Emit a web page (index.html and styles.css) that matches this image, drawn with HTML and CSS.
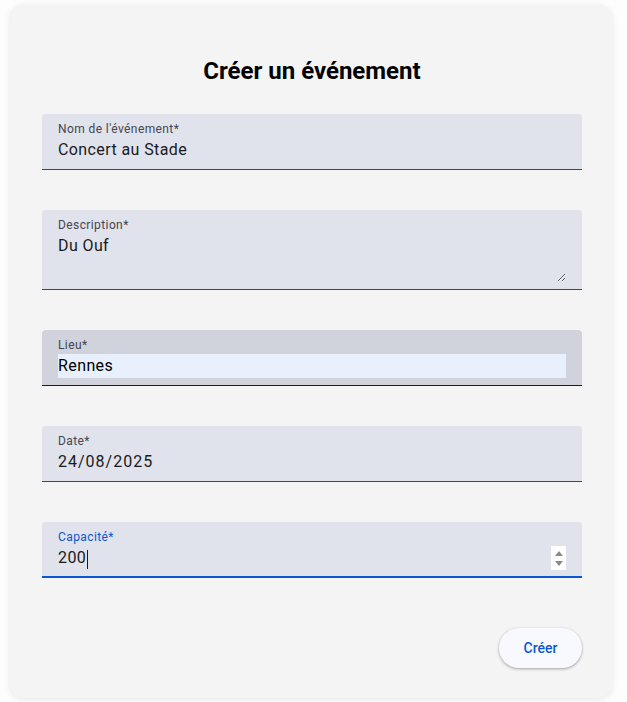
FILE: index.html
```
<!DOCTYPE html>
<html lang="fr">
<head>
<meta charset="utf-8">
<title>Créer un événement</title>
<link rel="stylesheet" href="styles.css">
</head>
<body>
<div class="card">
  <h1 class="title">Créer un événement</h1>
  <form class="form">
    <label class="field">
      <span class="label">Nom de l'événement*</span>
      <input class="input" type="text" value="Concert au Stade">
    </label>
    <label class="field field-tall">
      <span class="label">Description*</span>
      <textarea class="input textarea">Du Ouf</textarea>
    </label>
    <label class="field field-hover">
      <span class="label">Lieu*</span>
      <input class="input input-autofill" type="text" value="Rennes">
    </label>
    <label class="field">
      <span class="label">Date*</span>
      <input class="input input-date" type="text" value="24/08/2025">
    </label>
    <label class="field field-focus">
      <span class="label">Capacité*</span>
      <input class="input" type="text" value="200">
      <span class="caret"></span>
      <span class="spinner"><span class="tri tri-up"></span><span class="tri tri-down"></span></span>
    </label>
    <div class="actions">
      <button class="btn" type="button">Créer</button>
    </div>
  </form>
</div>
</body>
</html>
```
FILE: styles.css
```
* { box-sizing: border-box; }
html, body { margin: 0; padding: 0; background: #fdfdfd; }
body { font-family: Roboto, "Noto Sans", sans-serif; padding: 5px 15px 4px 10px; }
.card {
  width: 602px;
  height: 693px;
  background: #f4f4f4;
  border-radius: 14px;
  box-shadow: 0 1px 6px rgba(0,0,0,0.10);
  padding: 50px 30px 0 32px;
}
.title {
  margin: 0 0 27px;
  font-size: 24px;
  line-height: 32px;
  font-weight: 700;
  color: #000;
  text-align: center;
  letter-spacing: 0;
}
.form { display: flex; flex-direction: column; gap: 40px; width: 540px; }
.field {
  position: relative;
  display: flex;
  flex-direction: column;
  height: 56px;
  background: #e0e2ec;
  border-radius: 4px 4px 0 0;
  border-bottom: 1px solid #44474e;
  padding: 7px 16px 0;
}
.field-tall { height: 80px; }
.field-hover { background: #d0d2dc; border-bottom-color: #1a1b20; }
.field-focus { border-bottom: 2px solid #0b57d0; }
.field-focus .label { color: #0b57d0; }
.label {
  display: block;
  font-size: 12px;
  line-height: 16px;
  color: #44474e;
  margin-bottom: 1px;
  letter-spacing: 0.4px;
}
.input {
  display: block;
  width: 508px;
  height: 24px;
  border: 0;
  outline: 0;
  padding: 0;
  margin: 0;
  background: transparent;
  font-family: Roboto, "Noto Sans", sans-serif;
  font-size: 16px;
  line-height: 24px;
  color: #1a1b20;
  letter-spacing: 0.4px;
}
.input-autofill { background: #e8f0fe; color: #000; }
.input-date { letter-spacing: 1px; }
.textarea { height: 48px; resize: vertical; }
.caret {
  position: absolute;
  left: 45px;
  top: 28px;
  width: 1px;
  height: 19px;
  background: #1a1b20;
}
.spinner {
  position: absolute;
  right: 16px;
  top: 24px;
  width: 15px;
  height: 24px;
  background: #fff;
  display: flex;
  flex-direction: column;
  align-items: center;
  justify-content: center;
  gap: 5px;
}
.tri { width: 0; height: 0; border-left: 4px solid transparent; border-right: 4px solid transparent; }
.tri-up { border-bottom: 5px solid #8a8a8a; }
.tri-down { border-top: 5px solid #8a8a8a; }
.actions { display: flex; justify-content: flex-end; margin-top: 10px; }
.btn {
  width: 83px;
  height: 40px;
  border: 0;
  border-radius: 20px;
  background: #f8f9fe;
  color: #0b57d0;
  font-family: Roboto, "Noto Sans", sans-serif;
  font-size: 14px;
  font-weight: 500;
  box-shadow: 0 1px 3px rgba(0,0,0,0.35);
  cursor: pointer;
}
```
